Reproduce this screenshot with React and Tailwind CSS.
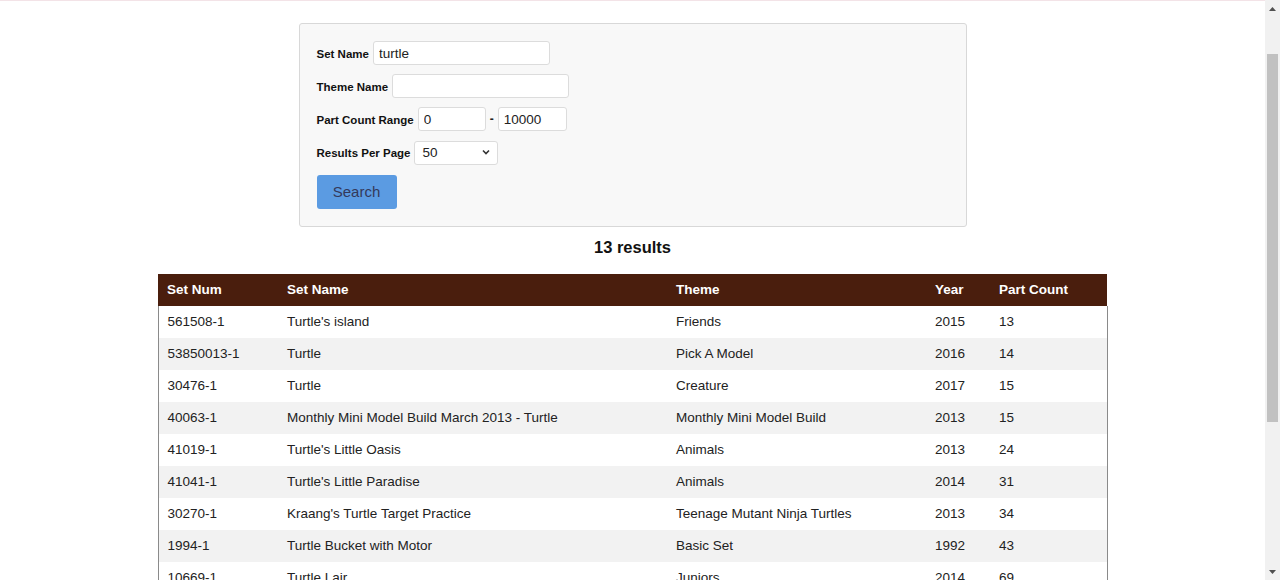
import { useState } from 'react';

const SETS = [
  { num: '561508-1', name: "Turtle's island", theme: 'Friends', year: 2015, parts: 13 },
  { num: '53850013-1', name: 'Turtle', theme: 'Pick A Model', year: 2016, parts: 14 },
  { num: '30476-1', name: 'Turtle', theme: 'Creature', year: 2017, parts: 15 },
  { num: '40063-1', name: 'Monthly Mini Model Build March 2013 - Turtle', theme: 'Monthly Mini Model Build', year: 2013, parts: 15 },
  { num: '41019-1', name: "Turtle's Little Oasis", theme: 'Animals', year: 2013, parts: 24 },
  { num: '41041-1', name: "Turtle's Little Paradise", theme: 'Animals', year: 2014, parts: 31 },
  { num: '30270-1', name: "Kraang's Turtle Target Practice", theme: 'Teenage Mutant Ninja Turtles', year: 2013, parts: 34 },
  { num: '1994-1', name: 'Turtle Bucket with Motor', theme: 'Basic Set', year: 1992, parts: 43 },
  { num: '10669-1', name: 'Turtle Lair', theme: 'Juniors', year: 2014, parts: 69 },
  { num: '79121-1', name: 'Turtle Sub Undersea Chase', theme: 'Teenage Mutant Ninja Turtles', year: 2014, parts: 684 },
  { num: '79103-1', name: 'Turtle Lair Attack', theme: 'Teenage Mutant Ninja Turtles', year: 2013, parts: 488 },
  { num: '79104-1', name: 'The Shellraiser Street Chase', theme: 'Teenage Mutant Ninja Turtles', year: 2013, parts: 620 },
  { num: '79115-1', name: 'Turtle Van Takedown', theme: 'Teenage Mutant Ninja Turtles', year: 2014, parts: 368 },
];

const inputCls =
  'h-6 bg-white border border-[#dcdcdc] rounded-[3px] px-[5px] text-[13.5px] text-[#222] outline-none';

const Field = ({ label, children, className = 'mb-[9px]' }) => (
  <div className={`flex items-center gap-1 ${className}`}>
    <label className="text-[11.5px] leading-4 pt-[1px] font-bold text-[#111]">{label}</label>
    {children}
  </div>
);

// Browser scrollbar drawn as part of the page frame
const Scrollbar = () => (
  <div className="w-[15px] shrink-0 bg-[#f1f1f1] flex flex-col">
    <div className="h-[17px] flex items-center justify-center">
      <svg className="w-[7px] h-[4px]" viewBox="0 0 7 4" fill="#505050">
        <path d="M0 4L3.5 0L7 4z" />
      </svg>
    </div>
    <div className="flex-1 pt-[37px] px-[2px]">
      <div className="h-[368px] bg-[#c1c1c1]" />
    </div>
    <div className="h-[17px] flex items-center justify-center">
      <svg className="w-[7px] h-[4px]" viewBox="0 0 7 4" fill="#505050">
        <path d="M0 0L3.5 4L7 0z" />
      </svg>
    </div>
  </div>
);

const App = () => {
  const [setName, setSetName] = useState('turtle');
  const [themeName, setThemeName] = useState('');
  const [minParts, setMinParts] = useState('0');
  const [maxParts, setMaxParts] = useState('10000');
  const [perPage, setPerPage] = useState('50');

  return (
    <div className="h-screen flex overflow-hidden bg-white font-['Liberation_Sans',Arial,sans-serif] text-[#222]">
      <div className="flex-1 overflow-hidden border-t border-[#f3e3e7]">
        {/* Search form */}
        <div className="w-[668px] mx-auto mt-[22px] bg-[#f8f8f8] border border-[#d8d8d8] rounded-[3px] pt-[17px] pb-[17px] px-[17px]">
          <Field label="Set Name">
            <input className={`${inputCls} w-[177px]`} value={setName} onChange={(e) => setSetName(e.target.value)} />
          </Field>
          <Field label="Theme Name">
            <input className={`${inputCls} w-[177px]`} value={themeName} onChange={(e) => setThemeName(e.target.value)} />
          </Field>
          <Field label="Part Count Range">
            <input className={`${inputCls} w-[68px]`} value={minParts} onChange={(e) => setMinParts(e.target.value)} />
            <span className="text-xs font-bold">-</span>
            <input className={`${inputCls} w-[69px]`} value={maxParts} onChange={(e) => setMaxParts(e.target.value)} />
          </Field>
          <Field label="Results Per Page" className="mb-[10px] mt-[1px]">
            <div className="relative">
              <select
                className={`${inputCls} w-[84px] appearance-none pl-[7px]`}
                value={perPage}
                onChange={(e) => setPerPage(e.target.value)}
              >
                <option>10</option>
                <option>25</option>
                <option>50</option>
                <option>100</option>
              </select>
              <svg
                className="absolute right-[8px] top-[9px] w-[8px] h-[6px] pointer-events-none"
                viewBox="0 0 8 6"
                fill="none"
                stroke="#333"
                strokeWidth="1.6"
              >
                <path d="M1 1.5l3 3 3-3" />
              </svg>
            </div>
          </Field>
          <button className="w-20 h-[34px] bg-[#5b9be2] rounded-[3px] text-[15px] text-[#34395a]">Search</button>
        </div>

        {/* Result count */}
        <h2 className="text-center text-[16.5px] leading-6 font-bold text-[#111] mt-[8px] mb-[15px]">
          {SETS.length} results
        </h2>

        {/* Results table */}
        <table className="w-[950px] mx-auto border-collapse text-[13.5px] table-fixed">
          <thead>
            <tr className="bg-[#4a1e0d] text-white h-8">
              <th className="w-[121px] text-left font-bold px-[9px]">Set Num</th>
              <th className="w-[389px] text-left font-bold px-2">Set Name</th>
              <th className="w-[259px] text-left font-bold px-2">Theme</th>
              <th className="w-[64px] text-left font-bold px-2">Year</th>
              <th className="text-left font-bold px-2">Part Count</th>
            </tr>
          </thead>
          <tbody className="border-x border-[#8a8a8a]">
            {SETS.map((s, i) => (
              <tr key={s.num} className={`h-8 ${i % 2 === 1 ? 'bg-[#f2f2f2]' : 'bg-white'}`}>
                <td className="px-[9px] text-[#222]">{s.num}</td>
                <td className="px-2 text-[#222]">{s.name}</td>
                <td className="px-2 text-[#222]">{s.theme}</td>
                <td className="px-2 text-[#222]">{s.year}</td>
                <td className="px-2 text-[#222]">{s.parts}</td>
              </tr>
            ))}
          </tbody>
        </table>
      </div>
      <Scrollbar />
    </div>
  );
};

export default App;
